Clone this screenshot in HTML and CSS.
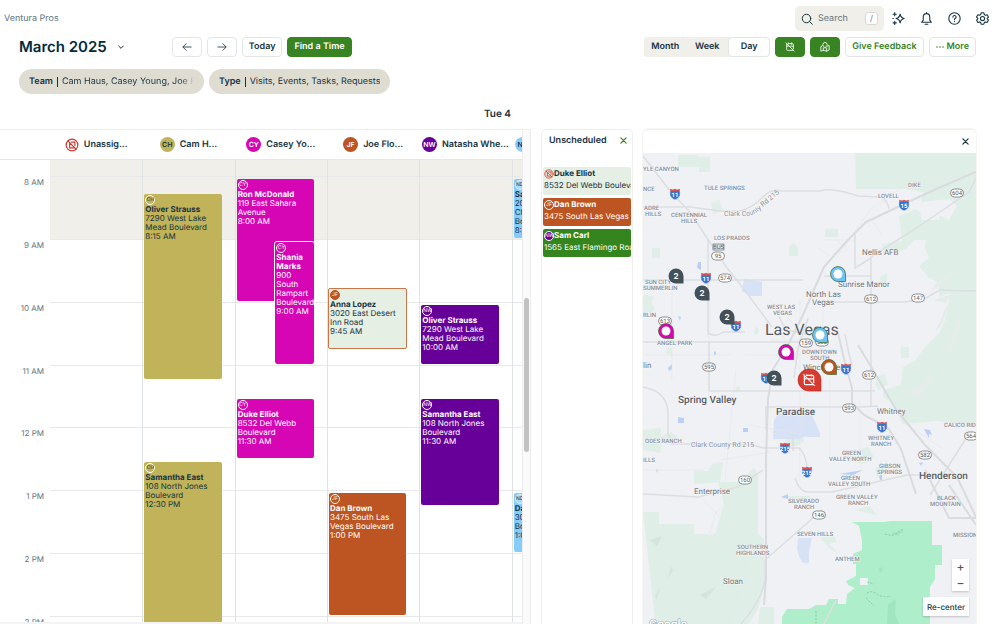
FILE: index.html
```html
<!DOCTYPE html>
<html lang="en">
<head>
<meta charset="utf-8">
<title>Schedule - Ventura Pros</title>
<link rel="stylesheet" href="styles.css">
</head>
<body>
<svg class="defs" aria-hidden="true">
  <symbol id="i-cal-off" viewBox="0 0 24 24"><path d="M8 4h10a2 2 0 0 1 2 2v11M4 5v13a2 2 0 0 0 2 2h13M11 10h9M4 10h4M8 2v3M16 2v4M2 2l20 20" /></symbol>
  <symbol id="i-none" viewBox="0 0 24 24"><circle cx="12" cy="12" r="10"/><path d="M5 5l14 14M8 9v8h8M11 7h6v6"/></symbol>
  <symbol id="i-x" viewBox="0 0 24 24"><path d="M3 3l18 18M21 3L3 21"/></symbol>
</svg>

<header class="topbar">
  <span class="company">Ventura Pros</span>
  <div class="topbar-tools">
    <label class="search">
      <svg class="icon" viewBox="0 0 24 24"><circle cx="11" cy="11" r="8.5"/><path d="M17 17l5.500 5.500"/></svg>
      <input type="text" placeholder="Search" aria-label="Search">
      <kbd>/</kbd>
    </label>
    <button class="tool" aria-label="Assistant"><svg class="icon" viewBox="0 0 24 24"><path d="M15 4c.8 5 2.500 7 7.500 8-5 1-6.700 3-7.500 8-.8-5-2.500-7-7.500-8 5-1 6.700-3 7.500-8z"/><path d="M5 1v6M2 4h6M5 17v6M2 20h6M1.500 12h1"/></svg></button>
    <button class="tool" aria-label="Notifications"><svg class="icon" viewBox="0 0 24 24"><path d="M3 19h18l-3-4V9a6 6 0 0 0-12 0v6zM12 3V1M9.500 22.500h5"/></svg></button>
    <button class="tool" aria-label="Help"><svg class="icon" viewBox="0 0 24 24"><circle cx="12" cy="12" r="10.500"/><path d="M9 9.500a3 3 0 1 1 4.200 2.700c-.9.400-1.200.9-1.200 1.800M12 17v.5"/></svg></button>
    <button class="tool" aria-label="Settings"><svg class="icon" viewBox="0 0 24 24"><path d="M9.500 1.500h5l.8 3.200 2 1.200 3.200-.9 2.500 4.300-2.400 2.300v1l2.400 2.300-2.500 4.300-3.200-.9-2 1.200-.8 3h-5l-.8-3-2-1.200-3.200.9L1 14.900l2.400-2.300v-1L1 9.300 3.500 5l3.200.9 2-1.200z"/><circle cx="12" cy="12" r="3.800"/></svg></button>
  </div>
</header>

<nav class="toolbar" aria-label="Schedule controls">
  <h1>March 2025</h1>
  <button class="month-menu" aria-label="Choose month"><svg class="icon" viewBox="0 0 24 24"><path d="M5 9l7 7 7-7"/></svg></button>
  <div class="group">
    <button class="btn arrow" aria-label="Previous"><svg class="icon" viewBox="0 0 24 24"><path d="M22 12H3M10 4l-8 8 8 8"/></svg></button>
    <button class="btn arrow" aria-label="Next"><svg class="icon" viewBox="0 0 24 24"><path d="M2 12h19M14 4l8 8-8 8"/></svg></button>
    <button class="btn">Today</button>
    <button class="btn primary">Find a Time</button>
  </div>
  <div class="group right">
    <div class="segmented">
      <button>Month</button><button>Week</button><button class="active">Day</button>
    </div>
    <button class="btn primary arrow" aria-label="Unscheduled list"><svg class="icon" viewBox="0 0 24 24"><use href="#i-cal-off"/></svg></button>
    <button class="btn primary arrow" aria-label="Map"><svg class="icon" viewBox="0 0 24 24"><path d="M6 9l-4 2v11l6-2 8 2 6-3V8l-4 2M8 14v6M16 14v8M12 14c-3-3-5-5-5-8a5 5 0 0 1 10 0c0 3-2 5-5 8z"/></svg></button>
    <button class="btn link">Give Feedback</button>
    <button class="btn link"><svg class="icon dots" viewBox="0 0 24 24"><circle cx="3" cy="12" r="2.500"/><circle cx="12" cy="12" r="2.500"/><circle cx="21" cy="12" r="2.500"/></svg>More</button>
  </div>
</nav>

<div class="filters">
  <button class="chip team"><b>Team</b><i></i><span>Cam Haus, Casey Young, Joe Flores</span></button>
  <button class="chip"><b>Type</b><i></i><span>Visits, Events, Tasks, Requests</span></button>
</div>

<h2 class="date">Tue 4</h2>

<main class="panels">
  <section class="calendar" aria-label="Day schedule">
    <div class="scroller">
      <div class="people">
        <span></span>
        <div class="person"><svg class="icon none" viewBox="0 0 24 24"><use href="#i-none"/></svg>Unassig...</div>
        <div class="person"><em class="avatar ch">CH</em>Cam H...</div>
        <div class="person"><em class="avatar cy">CY</em>Casey Yo...</div>
        <div class="person"><em class="avatar jf">JF</em>Joe Flo...</div>
        <div class="person"><em class="avatar nw">NW</em>Natasha Whe...</div>
        <div class="person"><em class="avatar nd">ND</em>Nathan Dobb...</div>
      </div>
      <div class="day">
        <div class="times">
          <span></span><span>8 AM</span><span>9 AM</span><span>10 AM</span><span>11 AM</span><span>12 PM</span><span>1 PM</span><span>2 PM</span><span>3 PM</span>
        </div>
        <div class="columns">
          <div class="lines"><i></i><i></i><i></i><i></i><i></i><i></i><i></i><i></i><i></i></div>
          <div class="col"></div>
          <div class="col">
            <article class="event ch" style="grid-row:3/15"><em class="badge">CH</em><b>Oliver Strauss</b><p>7290 West Lake Mead Boulevard</p><p>8:15 AM</p></article>
            <article class="event ch" style="grid-row:20/31"><em class="badge">CH</em><b>Samantha East</b><p>108 North Jones Boulevard</p><p>12:30 PM</p></article>
          </div>
          <div class="col">
            <article class="event cy" style="grid-row:2/10"><em class="badge">CY</em><b>Ron McDonald</b><p>119 East Sahara Avenue</p><p>8:00 AM</p></article>
            <article class="event cy half" style="grid-row:6/14"><em class="badge">CY</em><b>Shania Marks</b><p>900 South Rampart Boulevard</p><p>9:00 AM</p></article>
            <article class="event cy" style="grid-row:16/20"><em class="badge">CY</em><b>Duke Elliot</b><p>8532 Del Webb Boulevard</p><p>11:30 AM</p></article>
          </div>
          <div class="col">
            <article class="event visit" style="grid-row:9/13"><em class="badge jf">JF</em><b>Anna Lopez</b><p>3020 East Desert Inn Road</p><p>9:45 AM</p></article>
            <article class="event jf" style="grid-row:22/30"><em class="badge">JF</em><b>Dan Brown</b><p>3475 South Las Vegas Boulevard</p><p>1:00 PM</p></article>
          </div>
          <div class="col">
            <article class="event nw" style="grid-row:10/14"><em class="badge">NW</em><b>Oliver Strauss</b><p>7290 West Lake Mead Boulevard</p><p>10:00 AM</p></article>
            <article class="event nw" style="grid-row:16/23"><em class="badge">NW</em><b>Samantha East</b><p>108 North Jones Boulevard</p><p>11:30 AM</p></article>
          </div>
          <div class="col">
            <article class="event nd" style="grid-row:2/6"><em class="badge">ND</em><b>Sam Carl</b><p>20500 North Christopher Boulevard</p><p>8:00 AM</p></article>
            <article class="event nd" style="grid-row:22/26"><em class="badge">ND</em><b>Dan Brown</b><p>3000 Paradise Boulevard</p><p>1:00 PM</p></article>
          </div>
        </div>
      </div>
    </div>
    <div class="scrollbar"><span></span></div>
  </section>

  <section class="unscheduled">
    <header><h3>Unscheduled</h3><button class="close" aria-label="Close unscheduled"><svg class="icon" viewBox="0 0 24 24"><use href="#i-x"/></svg></button></header>
    <article class="job visit"><div><svg class="icon none" viewBox="0 0 24 24"><use href="#i-none"/></svg><b>Duke Elliot</b></div><p>8532 Del Webb Boulevard</p></article>
    <article class="job jf"><div><em class="badge">JF</em><b>Dan Brown</b></div><p>3475 South Las Vegas Boulevard</p></article>
    <article class="job green"><div><em class="badge nw">NW</em><b>Sam Carl</b></div><p>1565 East Flamingo Road</p></article>
  </section>

  <section class="map-panel" aria-label="Map">
    <header><button class="close" aria-label="Close map"><svg class="icon" viewBox="0 0 24 24"><use href="#i-x"/></svg></button></header>
    <div class="map">
      <svg class="canvas" viewBox="643 153 333 471" preserveAspectRatio="xMidYMin slice">
        <defs>
          <g id="interstate"><path d="M-5-3.500Q-5.500-1-5 1.500Q-4 4.500 0 6Q4 4.500 5 1.500Q5.500-1 5-3.500z" fill="#3b73c8" stroke="#fff" stroke-width=".6"/><path d="M-4.800-5.200Q-2-4 0-5.200Q2-4 4.800-5.200V-3H-4.800z" fill="#d6555a"/></g>
          <rect id="state" x="-6.500" y="-4" width="13" height="8" rx="4" stroke="#70757a" stroke-width=".8"/>
          <path id="pin" d="M0-7.500A7.500 7.500 0 1 0 0 7.500H7.500V0A7.500 7.500 0 0 0 0-7.500z"/>
          <path id="county-road" d="M724 216H746Q756 215 763 207L782 191"/>
        </defs>

        <g class="park">
          <path d="M678 155h20v2h12v15h-11v-5h-21z"/>
          <path d="M855 153H976V430l-18-6-20-3-35 3-12-22-8-5V390l18-5 2-18 12-6 10-14 15-15 5-12 3-15 2-12-11 4v-14l-10-5-10-12 10-8-4-10 1-8h-12l-9 10-22 4-1-10 20-3-3-25 20-8 5-16-22-3h-46z"/>
          <path d="M643 512h16v12h35v10h14v12h-4l1 28h-13l-4-18 13-20 14-2 9-30-6-22h22l14-14 4 6v60l6 5v50l-6 20-12 20h-90z"/>
          <path d="M711 203l8-3 4 10-10 5zM652 248h8v10h-8zM789 246l5-3 4 5v8h-9zM825 229h13v8h-13zM644 294l10 3-4 8-7-3zM643 430l18-2v8l10-4 8 6-6 8-11-3-2 10-17-3zM694 471h14l5-8 10-1-3 20-26 2zM901 347h8v11h-8zM880 277l7-4v8l-6 3zM643 298l7 2 5 9-4 4h-8zM785 440l4-5 14-1 1 7-7 5h-9zM848 452l20-5 6 10-10 7-16-3zM964 481h8v7h-8zM875 468l12-5 4 9-14 5zM755 326l3 1v7h-4z"/>
          <path d="M788 496h22v8h-22zM820 538l13-4 4 8-8 2 9 9-7-3zM855 510l14-4 9 10-10-3zM760 607h14v17h-16zM667 347l4 1 2 9-7-4zM736 387l4-1v5l-5 1zM877 376l8-2 3 10-9 6-4-6z"/>
        </g>
        <path fill="#f0f1f4" d="M921 202l28-3 8 7-8 14-10-5v5h-17l-2-8-9-6zM927 430l14-5 35 2v111l-38 2-20-20-13-55 12-15z"/>
        <path fill="#e6ece9" d="M929 292q12-15 22-20l-4 9-13 8zM933 300l18-6-5 9zM935 333l10-24 4-7-6 20zM947 350l13-35 2 5-12 33zM905 395q18-6 24-21l5 3-14 20z"/>
        <path fill="#d3e5dc" d="M650 540l12-4-5 10zM655 597l5-10-3 12zM700 595l16-8-10 12zM668 578l3-12 2 5z"/>
        <g class="forest">
          <path d="M885 521h47v24h10v20h-7v14l-5 8v37H782v-7l5-8h22l7-4h10l3-6h9v5h8l1-10 8-6-7-3-2-4 10-5v-12h-3v-10l9-4v-10l-3-14-7-4h38z"/>
          <path fill="#9fe5c0" d="M888 605l8-6-1 15 4 10h-12zM891 533l12-2-5 5zM878 569l5-2-2 6z"/>
          <path fill="#f0f1f4" d="M860 578h8v7h-8zM931 586h16v15h-11l-5 6z"/>
          <path class="trail" d="M885 534q8 3 12-1t7-3M816 611v13M867 582l7 2M867 593q4-3 10 1t14 2M866 598l8 8"/>
        </g>
        <g class="water">
          <path fill="#d8e2f6" d="M774 420l5-7 8 1 2-5h18l6 8 7 16v4h-17l-2 2h-28zM744 279l18 3v14h-12l-8-5zM798 538h14l-3 14v11h-6q-5-7-6-15z"/>
          <path d="M698 262h3v8l-4-2zM668 368l4-4v5l-3 2zM678 417l6 1v5h-6zM743 428h5v4h-5zM714 351l2 1v3h-2zM678 316l3 1-1 4zM781 497l7-3v5zM879 476l3-2v7l-2-1zM839 474l6-1 18-3-10 5zM924 429l6 1 2 5-3-1v4zM656 469l2 1-1 3zM919 463l4-1-2 4z"/>
        </g>

        <g class="street">
          <path d="M643 355h90M709 280v110M672 290v90M736 370l-12 120M745 355h90M800 300v180M830 380v80M643 470h60M703 500l60 60M735 494l-20 20-5 20 10 12M712 532q12 15 27 20l10 20-15 30-5 20M860 400v60M770 340h50M823 300v90M748 425l50 8M780 330l20 40M720 460l50-8M770 300l30 30M835 260l35-50 35-25h55"/>
          <path d="M824 240h30M828 232l20 18M872 220l10 15M818 248l12 8M900 420l45 30"/>
        </g>
        <g class="road">
          <path d="M643 156L671 192 690 212 707 238 727 268 740 284 772 327M643 207h47l30 4h20q12-3 22-13t18-7h40q12-4 38 5l23 1q7 4 8 12M643 280h160M708 238v95q8 5 15-1h22M643 342h182M709 342v49M709 391h166M643 387l10 3q14 6 15 22v22l4 10h75l17 4h35q8 6 9 30M766 407h96l16-1M766 406v24M643 494l55 3 40-10 25-17M765 560l57-50M765 560v20q-3 20-24 44M855 233v35l16-10M871 257v150M824 276h47M824 302h82l20-4 14-8 36 1M871 257l50-32 48-33 7-14M808 318l-10 30-4 30M845 334l4 20 3 12M778 310q2 14 10 20l30 7M793 434v17M795 478q5 14 12 14h25l75-17h20M965 440l-35 55M836 600l-12 24"/>
        </g>
        <g class="freeway">
          <path d="M976 172l-40 17-70 33-20 20-22 25-22 50-16 32-13 20-5 30-2 60v120l-2 26M838 333l7 30 7 25v15l12 12 15 8 10 6 12 20 15 45M858 345l15 25 22 38 30 37 32 32 19 40M925 470l24 48h27M949 485l27 40" />
        </g>

        <g class="area">
          <text x="643" y="171">YLE CANYON</text><text x="704" y="190">TULE SPRINGS</text><text x="643" y="191">NCE</text><text x="644" y="210">ADRE</text><text x="645" y="216">HILLS</text>
          <text x="671" y="217">CENTENNIAL</text><text x="681" y="223">HILLS</text><text x="714" y="240">LOS PRADOS</text><text x="908" y="187">DIKE</text><text x="878" y="198">LOVELL</text>
          <text x="645" y="284">SUN CITY</text><text x="643" y="290">SUMMERLIN</text><text x="643" y="317">RLIN</text><text x="657" y="345">ANGEL PARK</text><text x="767" y="309">WEST LAS</text><text x="773" y="315">VEGAS</text>
          <text x="802" y="354">DOWNTOWN</text><text x="810" y="360">SOUTH</text><text x="645" y="443">ODES RANCH</text><text x="643" y="462">ILLS</text><text x="944" y="427">CALICO RIDGE</text>
          <text x="868" y="440">WHITNEY</text><text x="871" y="446">RANCH</text><text x="842" y="455">GREEN</text><text x="829" y="461">VALLEY NORTH</text><text x="879" y="468">GIBSON</text><text x="877" y="474">SPRINGS</text>
          <text x="841" y="480">GREEN</text><text x="828" y="486">VALLEY SOUTH</text><text x="836" y="499">GREEN VALLEY</text><text x="848" y="505">RANCH</text><text x="788" y="503">SILVERADO</text><text x="794" y="509">RANCH</text>
          <text x="937" y="500">BLACK</text><text x="930" y="506">MOUNTAIN</text><text x="797" y="536">SEVEN HILLS</text><text x="953" y="537">MISSION HILLS</text><text x="737" y="549">SOUTHERN</text><text x="736" y="555">HIGHLANDS</text><text x="835" y="561">ANTHEM</text>
        </g>
        <g class="town">
          <text x="862" y="255">Nellis AFB</text><text x="838" y="287">Sunrise Manor</text><text x="806" y="297">North Las</text><text x="812" y="305">Vegas</text><text x="643" y="368">lin</text><text x="803" y="370">Winchester</text><text x="877" y="414">Whitney</text><text x="694" y="494">Enterprise</text><text x="723" y="584">Sloan</text>
          <text class="county"><textPath href="#county-road">Clark County Rd 215</textPath></text><text class="county" x="691" y="447">Clark County Rd 215</text>
        </g>
        <g class="city">
          <text x="678" y="403">Spring Valley</text><text x="776" y="415">Paradise</text><text x="919" y="479">Henderson</text><text class="metro" x="765" y="335">Las Vegas</text>
        </g>

        <g class="shield">
          <use href="#interstate" x="675" y="194"/><text x="675" y="197">11</text>
          <use href="#interstate" x="904" y="205"/><text x="904" y="208">15</text>
          <use href="#interstate" x="706" y="278"/><text x="706" y="281">11</text>
          <use href="#interstate" x="736" y="326"/><text x="736" y="329">11</text>
          <use href="#interstate" x="766" y="378"/><text x="766" y="381">15</text>
          <use href="#interstate" x="846" y="369"/><text x="846" y="372">11</text>
          <use href="#interstate" x="882" y="427"/><text x="882" y="430">11</text>
          <use href="#interstate" x="785" y="448"/><text x="785" y="451">215</text>
          <use href="#interstate" x="807" y="472"/><text x="807" y="475">215</text>
        </g>
        <g class="route">
          <rect x="713" y="244" width="11" height="6" fill="#e4e5e7" stroke="#70757a" stroke-width=".7"/><text x="718.500" y="249">BUS</text>
          <use href="#state" x="718" y="256"/><text x="718" y="258">95</text>
          <use href="#state" x="957" y="193"/><text x="957" y="195">604</text>
          <use href="#state" x="725" y="278"/><text x="725" y="280">574</text>
          <use href="#state" x="871" y="299"/><text x="871" y="301">612</text>
          <use href="#state" x="918" y="298"/><text x="918" y="300">147</text>
          <use href="#state" x="665" y="321"/><text x="665" y="323">613</text>
          <use href="#state" x="806" y="343"/><text x="806" y="345">159</text>
          <use href="#state" x="822" y="342"/><text x="822" y="344">582</text>
          <use href="#state" x="709" y="367"/><text x="709" y="369">595</text>
          <use href="#state" x="869" y="375"/><text x="869" y="377">612</text>
          <use href="#state" x="849" y="408"/><text x="849" y="410">593</text>
          <use href="#state" x="971" y="436"/><text x="971" y="438">564</text>
          <use href="#state" x="925" y="455"/><text x="925" y="457">582</text>
          <use href="#state" x="745" y="480"/><text x="745" y="482">160</text>
          <use href="#state" x="819" y="515"/><text x="819" y="517">146</text>
        </g>

        <g class="cluster">
          <use href="#pin" x="676" y="276"/><text x="676" y="279">2</text>
          <use href="#pin" x="702" y="293"/><text x="702" y="296">2</text>
          <use href="#pin" x="727" y="317"/><text x="727" y="320">2</text>
          <use href="#pin" x="774" y="378"/><text x="774" y="381">2</text>
        </g>
        <g class="stop">
          <use href="#pin" x="666" y="331" fill="#d606b5"/><circle cx="666" cy="331" r="4.500"/>
          <use href="#pin" x="786" y="352" fill="#d606b5"/><circle cx="786" cy="352" r="4.500"/>
          <use href="#pin" x="838" y="274" fill="#6cc1f5"/><circle cx="838" cy="274" r="4.500"/>
          <use href="#pin" x="820" y="335" fill="#6cc1f5"/><circle cx="820" cy="335" r="4.500"/>
          <use href="#pin" x="829" y="367" fill="#c05420"/><circle cx="829" cy="367" r="4.500"/>
        </g>
        <path d="M809 369a11 11 0 1 0 0 22h12v-11a11 11 0 0 0-12-11z" fill="#d93a2f" stroke="#a92b23" stroke-width=".6"/>
        <use href="#i-cal-off" class="pin-icon" x="802" y="373" width="14" height="14"/>
        <text class="google" x="649" y="628">Google</text>
      </svg>
      <div class="map-controls">
        <div class="zoom"><button aria-label="Zoom in">+</button><button aria-label="Zoom out">−</button></div>
        <button class="recenter">Re-center</button>
      </div>
    </div>
  </section>
</main>
</body>
</html>
```
FILE: styles.css
```css
:root {
  --ink: #163341;
  --muted: #60757d;
  --line: #e6e8e9;
  --green: #388422;
  --sand: #f0efe9;
}

* { box-sizing: border-box; margin: 0; }

body {
  display: flex;
  flex-direction: column;
  height: 100vh;
  overflow: hidden;
  background: #fff;
  color: var(--ink);
  font: 10px/12px Inter, "Liberation Sans", sans-serif;
  text-rendering: geometricPrecision;
}

button, input { font: inherit; color: inherit; text-rendering: inherit; }
button { padding: 0; border: 0; background: none; }
em { font-style: normal; }
.defs { display: none; }

.icon {
  width: 12px;
  height: 12px;
  flex: none;
  fill: none;
  stroke: currentColor;
  stroke-width: 2;
  stroke-linecap: round;
  stroke-linejoin: round;
}

/* Top bar */
.topbar {
  display: flex;
  justify-content: space-between;
  align-items: center;
  height: 31px;
  margin-bottom: 6px;
  padding: 6px 10px 0 4px;
}
.company { color: var(--muted); font-size: 9px; }
.topbar-tools { display: flex; align-items: center; gap: 15px; }
.search {
  display: flex;
  align-items: center;
  width: 89px;
  height: 25px;
  margin-right: -7px;
  padding: 0 6px;
  border-radius: 5px;
  background: var(--sand);
}
.search input {
  min-width: 0;
  flex: 1;
  padding: 0 0 0 5px;
  border: 0;
  background: none;
  font-size: 9px;
}
.search input::placeholder { color: var(--muted); opacity: 1; }
.search kbd {
  width: 13px;
  height: 13px;
  border: 1px solid #d8dad8;
  border-radius: 3px;
  background: #fff;
  color: var(--muted);
  font: 8px/11px Inter, sans-serif;
  text-align: center;
}
.tool { display: flex; }
.tool .icon { width: 13px; height: 13px; }

/* Toolbar */
.toolbar {
  display: flex;
  align-items: center;
  height: 20px;
  padding: 0 23px 0 19px;
}
h1 { font-size: 15px; line-height: 20px; font-weight: 600; color: #032b3a; }
.month-menu { display: flex; width: 65px; padding-left: 10px; }
.month-menu .icon { width: 8px; height: 8px; stroke-width: 3; }
.group { display: flex; gap: 5px; }
.right { margin-left: auto; }
.btn {
  display: flex;
  align-items: center;
  justify-content: center;
  height: 20px;
  padding: 0 6px;
  border: 1px solid #e3e6e6;
  border-radius: 4px;
  background: #fff;
  font-size: 9px;
  font-weight: 600;
}
.arrow { width: 30px; }
.arrow .icon { width: 10px; height: 10px; }
.primary { border-color: var(--green); background: var(--green); color: #fff; }
.link { color: var(--green); }
.dots { width: 8px; height: 8px; margin-right: 3px; fill: currentColor; stroke: none; }
.segmented {
  display: flex;
  border-radius: 4px;
  background: var(--sand);
  font-size: 9px;
  font-weight: 600;
}
.segmented button { width: 42px; border-radius: 4px; }
.segmented .active { border: 1px solid #e3e6e6; background: #fff; }

/* Filters */
.filters { display: flex; gap: 5px; padding: 12px 19px 0; }
.chip {
  display: flex;
  align-items: center;
  height: 25px;
  padding: 0 10px;
  border-radius: 13px;
  background: #dfddd1;
  font-size: 9px;
}
.chip b { font-weight: 600; }
.chip i { width: 1px; height: 10px; margin: 0 4px; background: var(--ink); }
.chip span { white-space: nowrap; overflow: hidden; }
.team { width: 185px; }
.team span { flex: 1; text-align: left; mask-image: linear-gradient(90deg, #000 90%, transparent); }

.date {
  padding: 13px 4px 8px 0;
  font-size: 10px;
  line-height: 14px;
  font-weight: 600;
  text-align: center;
}

/* Panels */
.panels {
  display: grid;
  grid-template-columns: minmax(0, 1fr) 92px 333px;
  grid-template-rows: minmax(0, 1fr);
  gap: 10px;
  flex: 1;
  min-height: 0;
  padding-right: 23px;
}
.calendar {
  display: flex;
  border-top: 1px solid #efefec;
  overflow: hidden;
}
.scroller {
  flex: 1;
  min-width: 0;
  overflow: hidden;
  border-bottom: 2px solid #f4f4f4;
}
.scrollbar {
  display: flex;
  justify-content: center;
  align-items: flex-start;
  width: 9px;
  border-left: 1px solid #ececec;
  border-right: 1px solid #ececec;
  background: #fafafa;
}
.scrollbar span { width: 5px; height: 154px; margin-top: 168px; border-radius: 3px; background: #c2c2c2; }
.people, .day { width: 604px; }
.people {
  display: grid;
  grid-template-columns: 50px repeat(6, 1fr);
  height: 30px;
  border-bottom: 1px solid #e4e7e8;
}
.person {
  display: flex;
  align-items: center;
  justify-content: center;
  gap: 5px;
  font-size: 9px;
  font-weight: 600;
  white-space: nowrap;
}
.none { color: #d0362b; }
.person .none { width: 14px; height: 14px; }
.avatar {
  width: 15px;
  height: 15px;
  border-radius: 50%;
  font-size: 7px;
  line-height: 15px;
  text-align: center;
}

.day { display: flex; height: 472px; }
.times, .lines { display: grid; grid-template-rows: 1fr repeat(7, 4fr) 1fr; }
.times {
  width: 50px;
  padding-right: 6px;
  color: var(--muted);
  font-size: 8px;
  line-height: 12px;
  text-align: right;
}
.times span { min-height: 0; }
.lines { position: absolute; inset: 0; background: linear-gradient(var(--sand) 79px, #fff 79px); }
.lines i { min-height: 0; }
.lines i + i { border-top: 1px solid var(--line); }
.columns {
  position: relative;
  display: grid;
  grid-template-columns: repeat(6, 1fr);
  flex: 1;
}
.col {
  position: relative;
  display: grid;
  grid-template: repeat(30, minmax(0, 1fr)) / repeat(2, minmax(0, 1fr));
  padding: 0 13px 0 1px;
}
.col + .col { border-left: 1px solid #e0e3e5; }

.event {
  grid-column: 1 / 3;
  margin: 3px 0 1px;
  padding: 1px 0 1px 1px;
  border-radius: 2px;
  font-size: 8px;
  line-height: 9px;
  overflow: hidden;
}
.event.half { grid-column: 2; outline: 1px solid #fff; }
.event b { display: block; font-weight: 700; }
.badge {
  display: block;
  flex: none;
  width: 10px;
  height: 10px;
  border: 1px solid;
  border-radius: 50%;
  font-size: 5px;
  line-height: 8px;
  text-align: center;
}
.ch { background: #c0b359; color: var(--ink); }
.ch .badge { border-color: #fff; }
.cy { background: #d606b5; color: #fff; }
.jf { background: #bc5521; color: #fff; }
.nw { background: #670099; color: #fff; }
.nd { background: #86ccfb; color: var(--ink); }
.nd .badge { border-color: #d9effd; background: #a8dafc; }
.visit { background: #e6efe4; color: var(--ink); }
.event.visit { margin: 2px -1px 0; border: 1px solid #c9764a; }
.visit .badge { border-color: #bc5521; }

/* Unscheduled jobs */
.unscheduled, .map-panel {
  border: 1px solid #f0efec;
  border-bottom: 0;
  border-radius: 5px 5px 0 0;
}
.unscheduled { display: flex; flex-direction: column; gap: 3px; padding: 0 1px; }
.unscheduled header {
  display: flex;
  justify-content: space-between;
  align-items: center;
  height: 21px;
  margin-bottom: 13px;
  padding: 0 4px 0 6px;
}
h3 { font-size: 9px; font-weight: 600; }
.close { display: flex; }
.close .icon { width: 7px; height: 7px; stroke-width: 4; }
.unscheduled .close { color: var(--green); }
.job {
  height: 28px;
  padding: 1px;
  border-radius: 2px;
  font-size: 8px;
  line-height: 11px;
  white-space: nowrap;
  overflow: hidden;
}
.job div { display: flex; align-items: center; height: 11px; }
.job p { padding-top: 1px; }
.job .none { width: 10px; height: 10px; }
.green { background: #35851f; color: #fff; }

/* Map */
.map-panel {
  display: flex;
  flex-direction: column;
  min-height: 0;
  border-width: 1px 0 0;
  box-shadow: 0 0 0 1px #f6f5f2;
  overflow: hidden;
}
.map-panel header { display: flex; justify-content: flex-end; align-items: center; height: 23px; padding-right: 7px; }
.map { position: relative; flex: 1; min-height: 0; background: #f0f1f4; overflow: hidden; }
.canvas { display: block; width: 100%; height: 100%; font-family: Roboto, sans-serif; }
.park { fill: #dfefe7; }
.forest { fill: #aeeeca; }
.water { fill: #b9cff7; }
.trail { fill: none; stroke: #6fc39a; stroke-width: .7; stroke-dasharray: 2 1.500; }
.street, .road, .freeway { fill: none; stroke-linejoin: round; }
.street { stroke: #e4e6e9; stroke-width: .6; }
.road { stroke: #dcdee1; stroke-width: 1.500; }
.freeway { stroke: #d9dbde; stroke-width: 2; }
.area, .town, .city { stroke: #f7f8f9; stroke-width: 1px; paint-order: stroke; }
.area { font-size: 6px; font-weight: 500; fill: #858d98; }
.town { font-size: 8px; fill: #6c737b; }
.county { font-size: 7px; fill: #8b9199; }
.city { font-size: 10px; fill: #555c64; font-weight: 500; }
.metro { font-size: 16px; font-weight: 400; }
.shield, .route, .cluster { text-anchor: middle; }
.shield { fill: #fff; font-size: 6px; font-weight: 700; }
.route { fill: #565b60; font-size: 6px; }
.route use { fill: #fff; }
.cluster { fill: #fff; font: 700 8px Inter, sans-serif; }
.cluster use { fill: #42505a; }
.stop { fill: #fff; }
.stop use { stroke: #38682f; stroke-width: .7; }
.pin-icon { fill: none; stroke: #fff; stroke-width: 2; }
.google { fill: #fff; stroke: #9a9da1; stroke-width: 1px; paint-order: stroke; font-size: 12px; font-weight: 500; }

.map-controls {
  position: absolute;
  right: 7px;
  bottom: 8px;
  display: flex;
  flex-direction: column;
  align-items: flex-end;
  gap: 6px;
}
.zoom { display: flex; flex-direction: column; width: 17px; background: #fff; box-shadow: 0 1px 2px #0003; }
.zoom button { height: 16px; font-size: 12px; line-height: 16px; font-weight: 500; color: #555; }
.recenter {
  height: 19px;
  padding: 0 4px;
  background: #fff;
  box-shadow: 0 1px 2px #0003;
  font-size: 8px;
  font-weight: 500;
}
```
